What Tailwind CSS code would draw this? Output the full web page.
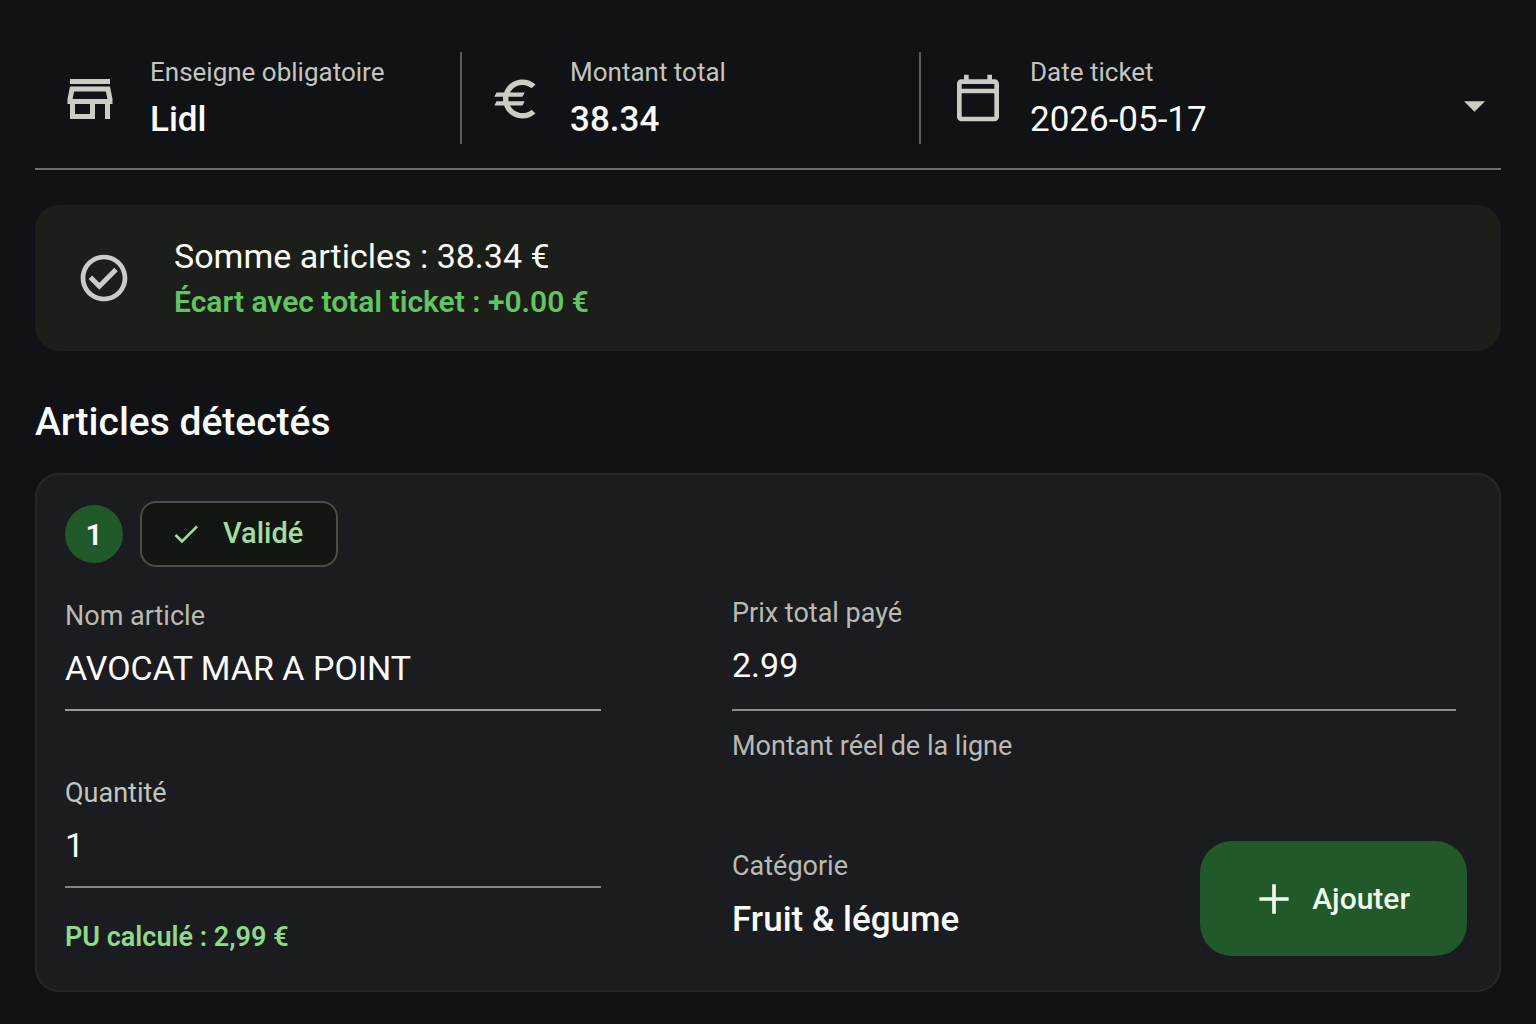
<!DOCTYPE html>
<html lang="fr">
<head>
    <meta charset="UTF-8">
    <meta name="viewport" content="width=device-width, initial-scale=1.0">
    <title>Ticket - Articles détectés</title>
    <script src="https://cdn.jsdelivr.net/npm/@tailwindcss/browser@4"></script>
</head>
<body class="min-h-screen bg-[#111216] px-[35px] pt-[52px] pb-8 font-[Roboto,sans-serif] text-[#fafaf8]">
    <!-- Ticket header -->
    <header class="grid grid-cols-[427fr_459fr_580fr] border-b-2 border-[#6e6f6c] pb-6">
        <div class="flex items-center border-r-2 border-[#5c5d5b] py-1 pl-[25px]">
            <svg class="mt-0.5 mr-[30px] size-[60px] shrink-0 fill-[#cbccc4]" viewBox="0 0 24 24" aria-hidden="true"><path d="M18.36 9l.6 3H5.04l.6-3h12.72M20 4H4v2h16V4zm0 3H4l-1 5v2h1v6h10v-6h4v6h2v-6h1v-2l-1-5zM6 18v-4h6v4H6z"/></svg>
            <div class="flex min-w-0 flex-1 flex-col gap-3">
                <label for="store" class="text-[26px] leading-8 text-[#c4c5be]">Enseigne obligatoire</label>
                <input id="store" type="text" value="Lidl" class="h-10 w-full bg-transparent text-[35px] leading-10 font-medium outline-none">
            </div>
        </div>
        <div class="flex items-center border-r-2 border-[#5c5d5b] py-1 pl-7">
            <svg class="mt-0.5 mr-7 size-[52px] shrink-0 fill-[#cbccc4]" viewBox="0 0 24 24" aria-hidden="true"><path d="M15 18.5c-2.51 0-4.68-1.42-5.76-3.5H15l1-2H8.58c-.05-.33-.08-.66-.08-1s.03-.67.08-1H15l1-2H9.24C10.32 6.92 12.5 5.5 15 5.5c1.61 0 3.09.59 4.23 1.57L21 5.3C19.41 3.87 17.3 3 15 3c-3.92 0-7.24 2.51-8.48 6H3l-1 2h4.06c-.04.33-.06.66-.06 1s.02.67.06 1H3l-1 2h4.52c1.24 3.49 4.56 6 8.48 6 2.31 0 4.41-.87 6-2.3l-1.78-1.77c-1.13.98-2.6 1.57-4.22 1.57z"/></svg>
            <div class="flex min-w-0 flex-1 flex-col gap-3">
                <label for="total" class="text-[26px] leading-8 text-[#c4c5be]">Montant total</label>
                <input id="total" type="text" inputmode="decimal" value="38.34" class="h-10 w-full bg-transparent text-[35px] leading-10 font-medium outline-none">
            </div>
        </div>
        <div class="flex items-center py-1 pr-4 pl-[29px]">
            <svg class="mr-6 size-14 shrink-0 fill-[#cbccc4]" viewBox="0 0 24 24" aria-hidden="true"><path d="M19 4h-1V2h-2v2H8V2H6v2H5c-1.1 0-2 .9-2 2v14c0 1.1.9 2 2 2h14c1.1 0 2-.9 2-2V6c0-1.1-.9-2-2-2zm0 16H5V10h14v10zm0-12H5V6h14v2z"/></svg>
            <div class="flex min-w-0 flex-1 flex-col gap-3">
                <label for="date" class="text-[26px] leading-8 text-[#c4c5be]">Date ticket</label>
                <select id="date" class="h-10 w-full appearance-none bg-transparent text-[35px] leading-10 outline-none">
                    <option>2026-05-17</option>
                </select>
            </div>
            <svg class="mt-4 h-[11px] w-[21px] shrink-0 fill-[#cbccc4]" viewBox="0 0 20 10" aria-hidden="true"><path d="M0 0h20L10 10z"/></svg>
        </div>
    </header>

    <!-- Sum check -->
    <section class="mt-[35px] flex items-center rounded-[24px] bg-[#1c1e19] py-[31px] pl-[41px]">
        <svg class="mr-[42px] size-14 shrink-0 fill-[#cbccc8]" viewBox="0 0 24 24" aria-hidden="true"><path d="M12 2C6.48 2 2 6.48 2 12s4.48 10 10 10 10-4.48 10-10S17.52 2 12 2zm0 18c-4.41 0-8-3.59-8-8s3.59-8 8-8 8 3.59 8 8-3.59 8-8 8zm4.4-12.4L10 14l-3.1-3.1-1.5 1.5 4.6 4.6 7.9-7.9z"/></svg>
        <div class="flex flex-col gap-2">
            <p class="text-[34px] leading-10">Somme articles : 38.34 €</p>
            <p class="text-[30px] leading-9 font-semibold text-[#62c462]">Écart avec total ticket : +0.00 €</p>
        </div>
    </section>

    <!-- Detected items -->
    <h1 class="mt-[49px] text-[39px] leading-[44px] font-medium">Articles détectés</h1>

    <article class="mt-[29px] rounded-[24px] border-2 border-[#25262a] bg-[#1b1c20] pt-[26px] pr-8 pb-[34px] pl-7">
        <div class="flex items-center gap-[17px]">
            <span class="flex size-[58px] items-center justify-center rounded-full bg-[#22592b] text-[30px] font-semibold">1</span>
            <span class="flex h-[66px] items-center rounded-2xl border-2 border-[#4b4d47] bg-[#131611] pr-[33px] pl-7 text-[29px] font-medium text-[#a2dca2]">
                <svg class="mr-[21px] size-8 fill-current" viewBox="0 0 24 24" aria-hidden="true"><path d="M9 16.17L4.83 12l-1.42 1.41L9 19 21 7l-1.41-1.41z"/></svg>
                Validé
            </span>
        </div>

        <div class="mt-[30px] grid grid-cols-[536fr_735fr] gap-x-[131px]">
            <div class="pt-[3px]">
                <div class="flex flex-col gap-4 border-b-2 border-[#9a9b95] pb-[21px]">
                    <label for="name" class="text-[27px] leading-8 text-[#b9bab3]">Nom article</label>
                    <input id="name" type="text" value="AVOCAT MAR A POINT" class="h-10 w-full bg-transparent text-[34px] leading-10 outline-none">
                </div>
                <div class="mt-[66px] flex flex-col gap-4 border-b-2 border-[#848680] pb-[21px]">
                    <label for="quantity" class="text-[27px] leading-8 text-[#c4c5be]">Quantité</label>
                    <input id="quantity" type="text" inputmode="numeric" value="1" class="h-10 w-full bg-transparent text-[34px] leading-10 outline-none">
                </div>
                <p class="mt-[33px] text-[27px] leading-8 font-semibold text-[#8fd98c]">PU calculé : 2,99 €</p>
            </div>

            <div>
                <div class="mr-[11px] flex flex-col gap-4 border-b-2 border-[#8c8d88] pb-6">
                    <label for="price" class="text-[27px] leading-8 text-[#b9bab3]">Prix total payé</label>
                    <input id="price" type="text" inputmode="decimal" value="2.99" class="h-10 w-full bg-transparent text-[34px] leading-10 outline-none">
                </div>
                <p class="mt-[19px] text-[27px] leading-8 text-[#b9bab3]">Montant réel de la ligne</p>
                <div class="mt-[79px] flex items-start justify-between">
                    <div class="flex min-w-0 flex-1 flex-col gap-[18px] pt-[9px]">
                        <label for="category" class="text-[27px] leading-8 text-[#b9bab3]">Catégorie</label>
                        <select id="category" class="h-10 w-full appearance-none bg-transparent text-[35px] leading-10 font-medium outline-none">
                            <option>Fruit &amp; légume</option>
                        </select>
                    </div>
                    <button type="button" class="flex h-[115px] shrink-0 items-center rounded-[32px] bg-[#22592b] pr-[57px] pl-[52px] text-[30px] font-medium text-[#eefbea]">
                        <svg class="mr-4 size-11 fill-current" viewBox="0 0 24 24" aria-hidden="true"><path d="M20 13h-7v7h-2v-7H4v-2h7V4h2v7h7z"/></svg>
                        Ajouter
                    </button>
                </div>
            </div>
        </div>
    </article>
</body>
</html>
